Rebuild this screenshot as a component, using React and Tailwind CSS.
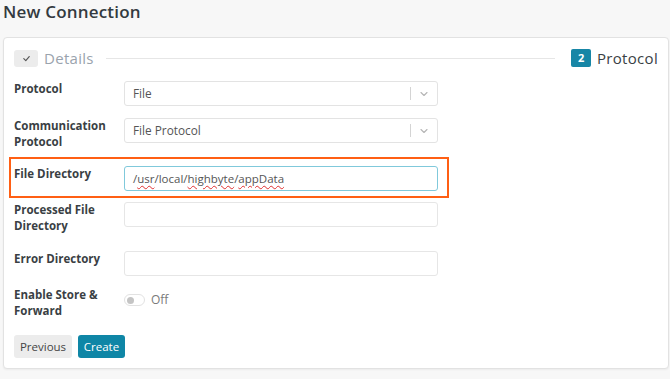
import React from "react";

function Chevron() {
  return (
    <svg width="10" height="10" viewBox="0 0 10 10" className="text-[#b5b5b5]">
      <path d="M2 3.5 L5 6.5 L8 3.5" fill="none" stroke="currentColor" strokeWidth="1.1" strokeLinecap="round" strokeLinejoin="round" />
    </svg>
  );
}

function Select({ value }) {
  return (
    <div className="w-[314px] h-[25px] border border-[#e3e3e3] rounded-[3px] bg-white flex items-center pl-[8px] pr-[8px] text-[11.8px] text-[#555]">
      <span className="flex-1">{value}</span>
      <span className="w-px h-[13px] bg-[#d4d4d4] mr-[8px]"></span>
      <Chevron />
    </div>
  );
}

function Input({ children, focused }) {
  return (
    <div
      className={
        focused
          ? "w-[314px] h-[25px] border border-[#80c9db] rounded-[3px] bg-white flex items-center pl-[8px] text-[11.5px] text-[#555]"
          : "w-[314px] h-[25px] border border-[#e6e6e6] rounded-[3px] bg-white flex items-center pl-[8px] text-[11.5px] text-[#555]"
      }
    >
      {children}
    </div>
  );
}

function Label({ children }) {
  return (
    <div className="w-[110px] shrink-0 text-[11.5px] leading-[16px] font-bold text-[#3a3f44]">{children}</div>
  );
}

export default function App() {
  const wavy = "underline decoration-wavy decoration-[#e03030] decoration-[1px] underline-offset-[2px]";
  return (
    <div
      className="w-[670px] h-[379px] bg-[#f7f7f7] overflow-hidden"
      style={{ fontFamily: '"Open Sans", "Liberation Sans", sans-serif' }}
    >
      <div className="pl-[3px] pt-[1px] h-[37px] text-[17px] leading-[22px] font-semibold text-[#333a40] tracking-[0.2px]">
        New Connection
      </div>
      <div className="ml-[3px] w-[666px] h-[332px] bg-white border border-[#e2e2e2] rounded-[4px] shadow-[0_1px_2px_rgba(0,0,0,0.05)] pl-[10px] pt-[11px]">
        <div className="flex items-center h-[18px] pr-[10px]">
          <div className="w-[24px] h-[17px] rounded-[3px] bg-[#ececec] flex items-center justify-center">
            <svg width="9" height="9" viewBox="0 0 10 10">
              <path d="M2 5.2 L4.2 7.3 L8 2.8" fill="none" stroke="#555" strokeWidth="1.3" strokeLinecap="round" strokeLinejoin="round" />
            </svg>
          </div>
          <span className="ml-[6px] text-[15px] text-[#9aa3ad] tracking-[0.3px]">Details</span>
          <div className="ml-[12px] flex-1 h-px bg-[#e6e6e6]"></div>
          <div className="ml-[16px] w-[20px] h-[18px] rounded-[2px] bg-[#1786a6] flex items-center justify-center text-white text-[11px] font-bold">2</div>
          <span className="ml-[6px] text-[15px] text-[#3a3f44] font-medium tracking-[0.3px]">Protocol</span>
        </div>

        <div className="mt-[14px] flex">
          <Label>Protocol</Label>
          <Select value="File" />
        </div>

        <div className="mt-[12px] flex h-[32px]">
          <Label>
            Communication
            <br />
            Protocol
          </Label>
          <Select value="File Protocol" />
        </div>

        <div className="relative mt-[16px] flex">
          <Label>File Directory</Label>
          <Input focused>
            <span>
              /<span className={wavy}>usr</span>/local/<span className={wavy}>highbyte</span>/<span className={wavy}>appData</span>
            </span>
          </Input>
          <div className="absolute left-[-5px] top-[-9px] w-[440px] h-[41px] border-2 border-[#ff5f14] pointer-events-none"></div>
        </div>

        <div className="mt-[11px] flex h-[32px]">
          <Label>
            Processed File
            <br />
            Directory
          </Label>
          <Input />
        </div>

        <div className="mt-[17px] flex">
          <Label>Error Directory</Label>
          <Input />
        </div>

        <div className="mt-[11px] flex h-[32px]">
          <Label>
            Enable Store &amp;
            <br />
            Forward
          </Label>
          <div className="flex items-start pt-[7px]">
            <div className="w-[21px] h-[12px] rounded-full border border-[#e2e2e2] bg-white flex items-center pl-[2px]">
              <div className="w-[7px] h-[7px] rounded-full bg-[#c4c4c4]"></div>
            </div>
            <span className="ml-[6px] text-[12px] leading-[12px] text-[#7a7a7a]">Off</span>
          </div>
        </div>

        <div className="mt-[16px] flex gap-[6px]">
          <button className="w-[58px] h-[23px] rounded-[3px] bg-[#ececec] text-[11.5px] text-[#444]">Previous</button>
          <button className="w-[47px] h-[23px] rounded-[3px] bg-[#0f86a6] text-[11.5px] text-white font-medium">Create</button>
        </div>
      </div>
    </div>
  );
}
